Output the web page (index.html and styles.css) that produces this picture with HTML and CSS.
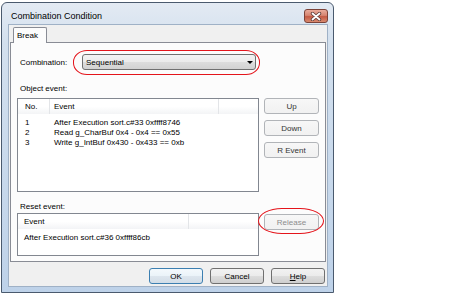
FILE: index.html
```html
<html>
<head>
    <link rel="stylesheet" href="styles.css">
</head>
<body>
    <div class="window">
        <div class="titlebar">
            <span class="title">Combination Condition</span>
            <span class="close">
                <svg width="12" height="9" viewBox="0 0 12 9">
                    <path d="M2.5 1.5 L9.5 7.5 M9.5 1.5 L2.5 7.5" stroke="#5a3a36" stroke-width="3.4" stroke-linecap="round" />
                    <path d="M2.5 1.5 L9.5 7.5 M9.5 1.5 L2.5 7.5" stroke="#ffffff" stroke-width="1.8" stroke-linecap="round" />
                </svg>
            </span>
        </div>
        <div class="client">
            <div class="tabs">
                <span class="tab">Break</span>
            </div>
            <div class="panel">
                <div class="field">
                    <span class="field-label">Combination:</span>
                    <div class="combo">
                        <span>Sequential</span>
                        <span class="arrow"></span>
                        <span class="mark mark-combo"></span>
                    </div>
                </div>

                <div class="caption caption-object">Object event:</div>
                <div class="group">
                    <div class="list list-object">
                        <div class="list-head">
                            <span class="col col-no">No.</span>
                            <span class="col col-event">Event</span>
                            <span class="col col-fill"></span>
                        </div>
                        <div class="list-body">
                            <div class="row"><span class="col col-no">1</span><span class="col col-event">After Execution sort.c#33 0xffff8746</span></div>
                            <div class="row"><span class="col col-no">2</span><span class="col col-event">Read g_CharBuf 0x4 - 0x4 == 0x55</span></div>
                            <div class="row"><span class="col col-no">3</span><span class="col col-event">Write g_IntBuf 0x430 - 0x433 == 0xb</span></div>
                        </div>
                    </div>
                    <div class="side">
                        <button class="btn btn-light">Up</button>
                        <button class="btn btn-light">Down</button>
                        <button class="btn btn-light">R Event</button>
                    </div>
                </div>

                <div class="caption caption-reset">Reset event:</div>
                <div class="group">
                    <div class="list list-reset">
                        <div class="list-head">
                            <span class="col col-reset">Event</span>
                            <span class="col col-fill"></span>
                        </div>
                        <div class="list-body">
                            <div class="row"><span class="col col-reset">After Execution sort.c#36 0xffff86cb</span></div>
                        </div>
                    </div>
                    <div class="side side-reset">
                        <button class="btn btn-light btn-disabled">Release</button>
                        <span class="mark mark-release"></span>
                    </div>
                </div>
            </div>
            <div class="actions">
                <button class="btn btn-default">OK</button>
                <button class="btn">Cancel</button>
                <button class="btn"><u>H</u>elp</button>
            </div>
        </div>
    </div>
</body>
</html>
```

FILE: styles.css
```css
body {
    margin: 0;
    background: #ffffff;
    font-family: "Liberation Sans", Arial, sans-serif;
    font-size: 8px;
    color: #000;
}

/* outer window frame */
.window {
    box-sizing: border-box;
    width: 333px;
    height: 291px;
    margin: 2px 0 0 1px;
    padding: 0 5px 5px 6px;
    border: 1px solid #4a5a6e;
    border-radius: 6px 6px 0 0;
    background: linear-gradient(#e3eaf3, #d3e0ee 40px, #bed2e9);
    display: flex;
    flex-direction: column;
}
.titlebar {
    height: 21px;
    display: flex;
    align-items: flex-start;
    justify-content: space-between;
}
.title {
    font-size: 9px;
    line-height: 12px;
    padding: 7px 0 0 3px;
}
.close {
    box-sizing: border-box;
    width: 24px;
    height: 14px;
    margin-top: 6px;
    border: 1px solid #7b4238;
    border-radius: 3px;
    background: linear-gradient(#e9ab9b, #d68571 45%, #c45a44 55%, #d98a6f);
    display: flex;
    align-items: center;
    justify-content: center;
}

.client {
    flex: 1;
    box-sizing: border-box;
    border: 1px solid #9fb1c6;
    background: #f0f0f0;
    padding: 2px 1px 0 1px;
    display: flex;
    flex-direction: column;
}

/* tab strip */
.tabs {
    height: 15px;
    display: flex;
}
.tab {
    position: relative;
    z-index: 1;
    box-sizing: border-box;
    width: 34px;
    height: 16px;
    margin-left: 3px;
    padding-left: 3px;
    line-height: 15px;
    border: 1px solid #898c95;
    border-bottom: none;
    border-radius: 2px 2px 0 0;
    background: #fcfcfc;
}
.panel {
    box-sizing: border-box;
    height: 220px;
    border: 1px solid #898c95;
    background: #fcfcfc;
}

.field {
    margin-top: 11px;
    padding-left: 9px;
    display: flex;
    align-items: center;
}
.field-label {
    width: 62px;
}
.combo {
    position: relative;
    box-sizing: border-box;
    width: 174px;
    height: 16px;
    padding-left: 3px;
    border: 1px solid #707070;
    border-radius: 3px;
    background: linear-gradient(#f3f3f3, #ebebeb 50%, #dddddd 51%, #d2d2d2);
    display: flex;
    align-items: center;
    justify-content: space-between;
}
.arrow {
    width: 0;
    height: 0;
    margin-right: 2px;
    border-left: 3px solid transparent;
    border-right: 3px solid transparent;
    border-top: 3px solid #000;
}

/* hand drawn red marks */
.mark {
    position: absolute;
    box-sizing: border-box;
    border: 1px solid #e4141b;
}
.mark-combo {
    left: -10px;
    top: -5px;
    width: 187px;
    height: 25px;
    border-radius: 14px / 12px;
}
.mark-release {
    left: -6px;
    top: -6px;
    width: 66px;
    height: 26px;
    border-radius: 24px / 13px;
}

.caption {
    height: 12px;
    line-height: 12px;
    padding-left: 9px;
}
.caption-object {
    margin-top: 13px;
    margin-bottom: 3px;
}
.caption-reset {
    margin-top: 9px;
}

.group {
    display: flex;
    padding-left: 6px;
}
.list {
    box-sizing: border-box;
    width: 242px;
    border: 1px solid #828790;
    background: #ffffff;
}
.list-object {
    height: 94px;
}
.list-reset {
    height: 43px;
}
.list-head {
    height: 15px;
    display: flex;
    background: linear-gradient(#ffffff 50%, #f3f4f6);
}
.list-head .col {
    box-sizing: border-box;
    height: 15px;
    line-height: 15px;
    border-right: 1px solid #e3e5e8;
}
.list-head .col-fill {
    flex: 1;
    border-right: none;
}
.list-body {
    padding-top: 4px;
}
.row {
    height: 10px;
    line-height: 10px;
    display: flex;
    white-space: nowrap;
}
.col {
    box-sizing: border-box;
}
.col-no {
    width: 32px;
    padding-left: 7px;
}
.col-event {
    width: 169px;
    padding-left: 4px;
}
.col-reset {
    width: 171px;
    padding-left: 6px;
}

.side {
    margin-left: 5px;
    display: flex;
    flex-direction: column;
    gap: 6px;
}
.side-reset {
    position: relative;
    margin-top: 1px;
    align-self: flex-start;
}

/* buttons */
.btn {
    box-sizing: border-box;
    width: 54px;
    height: 16px;
    padding: 0;
    font-family: "Liberation Sans", Arial, sans-serif;
    font-size: 8px;
    color: #000;
    border: 1px solid #707070;
    border-radius: 3px;
    background: linear-gradient(#f2f2f2, #ebebeb 50%, #dddddd 51%, #cfcfcf);
}
.btn-light {
    width: 55px;
    color: #333;
    border-color: #b1b4b8;
    background: linear-gradient(#f7f7f7, #f1f1f1);
}
.btn-disabled {
    color: #8d8d8d;
}
.btn-default {
    border-color: #3c7fb1;
    background: linear-gradient(#f4f9fc, #eaf3f9 50%, #dde6ee 51%, #d2dde7);
}
.actions {
    margin-top: 6px;
    padding-right: 1px;
    display: flex;
    justify-content: flex-end;
    gap: 7px;
}
```
